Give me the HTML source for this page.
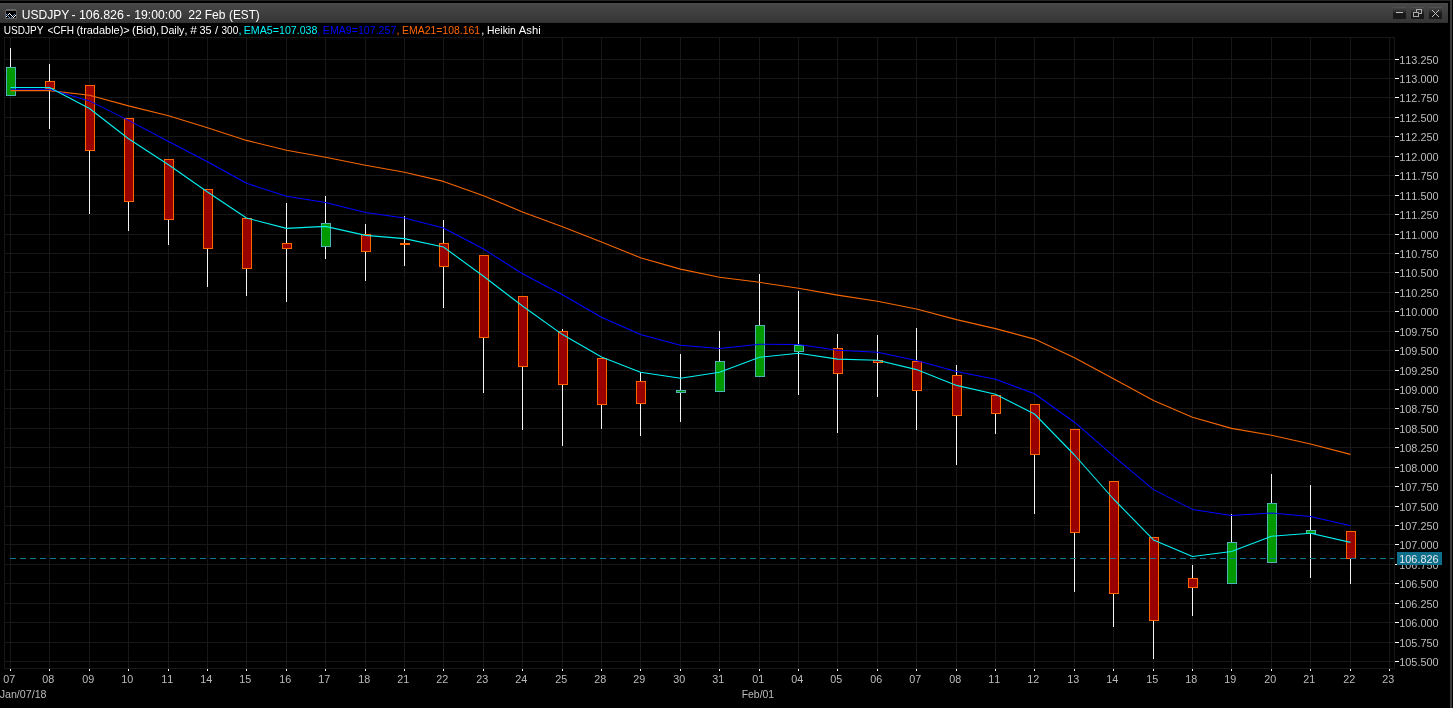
<!DOCTYPE html>
<html><head><meta charset="utf-8"><title>USDJPY</title>
<style>
html,body{margin:0;padding:0;background:#000;}
body{width:1453px;height:708px;overflow:hidden;position:relative;font-family:"Liberation Sans",Arial,sans-serif;}
#top{position:absolute;left:0;top:0;width:1452px;height:1px;background:#252525;}
#rb1{position:absolute;left:1450px;top:0;width:2px;height:708px;background:#3a3a3a;}
#tb{position:absolute;left:0;top:3px;width:1448px;height:20px;background:linear-gradient(#4b4b4b 0,#464646 2px,#363636 19px,#2c2c2c 20px);}
.btn{position:absolute;top:7px;width:13px;height:12px;background:linear-gradient(#505050 0,#505050 1px,#454545 1px,#303030 35%,#1a1a1a 55%,#181818);}
svg{position:absolute;left:0;top:0;will-change:transform;}
text{font-family:"Liberation Sans",Arial,sans-serif;font-size:11px;fill:#bcbcbc;font-kerning:none;}
.t text{font-size:12px;fill:#fff;}
</style></head><body>
<div id="top"></div><div id="rb1"></div>
<div id="tb"></div>
<div class="btn" style="left:1393px"></div><div class="btn" style="left:1411px"></div><div class="btn" style="left:1429px"></div>

<svg width="1453" height="708" viewBox="0 0 1453 708">
<g shape-rendering="crispEdges"><rect x="6" y="9" width="10" height="1" fill="#666"/><rect x="5" y="10" width="12" height="9" fill="#606060"/><rect x="6" y="11" width="10" height="7" fill="#000"/>
<rect x="6" y="14" width="1" height="1" fill="#5f9ee0"/>
<rect x="7" y="15" width="1" height="1" fill="#5f9ee0"/>
<rect x="8" y="16" width="1" height="1" fill="#5f9ee0"/>
<rect x="9" y="17" width="1" height="1" fill="#5f9ee0"/>
<rect x="11" y="17" width="1" height="1" fill="#5f9ee0"/>
<rect x="12" y="16" width="1" height="1" fill="#5f9ee0"/>
<rect x="13" y="15" width="1" height="1" fill="#5f9ee0"/>
<rect x="14" y="14" width="1" height="1" fill="#5f9ee0"/>
<rect x="6" y="16" width="1" height="1" fill="#fff"/>
<rect x="8" y="14" width="1" height="1" fill="#fff"/>
<rect x="9" y="13" width="1" height="1" fill="#fff"/>
<rect x="10" y="14" width="1" height="1" fill="#fff"/>
<rect x="11" y="15" width="1" height="1" fill="#fff"/>
<rect x="12" y="16" width="1" height="1" fill="#fff"/>
<rect x="13" y="17" width="1" height="1" fill="#fff"/>
<rect x="14" y="16" width="1" height="1" fill="#fff"/>
<rect x="15" y="15" width="1" height="1" fill="#fff"/>
</g>
<g class="t"><text y="19">
<tspan x="21.69" textLength="47.63" lengthAdjust="spacingAndGlyphs">USDJPY</tspan> <tspan x="71.59" textLength="4.02" lengthAdjust="spacingAndGlyphs">-</tspan> <tspan x="78.96" textLength="45.00" lengthAdjust="spacingAndGlyphs">106.826</tspan> <tspan x="126.18" textLength="4.15" lengthAdjust="spacingAndGlyphs">-</tspan> <tspan x="134.28" textLength="47.51" lengthAdjust="spacingAndGlyphs">19:00:00</tspan> <tspan x="188.23" textLength="13.69" lengthAdjust="spacingAndGlyphs">22</tspan> <tspan x="204.70" textLength="20.69" lengthAdjust="spacingAndGlyphs">Feb</tspan> <tspan x="229.08" textLength="30.72" lengthAdjust="spacingAndGlyphs">(EST)</tspan>
</text></g>
<text y="34">
<tspan x="3.78" textLength="39.65" lengthAdjust="spacingAndGlyphs" style="fill:#ffffff">USDJPY</tspan> <tspan x="47.46" textLength="26.48" lengthAdjust="spacingAndGlyphs" style="fill:#ffffff">&lt;CFH</tspan> <tspan x="76.44" textLength="53.27" lengthAdjust="spacingAndGlyphs" style="fill:#ffffff">(tradable)&gt;</tspan> <tspan x="132.12" textLength="27.12" lengthAdjust="spacingAndGlyphs" style="fill:#ffffff">(Bid),</tspan> <tspan x="160.72" textLength="26.65" lengthAdjust="spacingAndGlyphs" style="fill:#ffffff">Daily,</tspan> <tspan x="190.30" textLength="6.61" lengthAdjust="spacingAndGlyphs" style="fill:#ffffff">#</tspan> <tspan x="199.43" textLength="12.15" lengthAdjust="spacingAndGlyphs" style="fill:#ffffff">35</tspan> <tspan x="214.97" textLength="3.10" lengthAdjust="spacingAndGlyphs" style="fill:#ffffff">/</tspan> <tspan x="221.47" textLength="16.74" lengthAdjust="spacingAndGlyphs" style="fill:#ffffff">300</tspan> <tspan x="238.49" textLength="3.06" lengthAdjust="spacingAndGlyphs" style="fill:#00f4fc">,</tspan> <tspan x="243.73" textLength="73.74" lengthAdjust="spacingAndGlyphs" style="fill:#00f4fc">EMA5=107.038</tspan> <tspan x="317.29" textLength="3.06" lengthAdjust="spacingAndGlyphs" style="fill:#0000ff">,</tspan> <tspan x="322.83" textLength="73.49" lengthAdjust="spacingAndGlyphs" style="fill:#0000ff">EMA9=107.257</tspan> <tspan x="396.39" textLength="3.06" lengthAdjust="spacingAndGlyphs" style="fill:#ff6600">,</tspan> <tspan x="402.05" textLength="78.01" lengthAdjust="spacingAndGlyphs" style="fill:#ff6600">EMA21=108.161</tspan> <tspan x="481.19" textLength="3.06" lengthAdjust="spacingAndGlyphs" style="fill:#ffffff">,</tspan> <tspan x="487.06" textLength="28.86" lengthAdjust="spacingAndGlyphs" style="fill:#ffffff">Heikin</tspan> <tspan x="518.82" textLength="21.86" lengthAdjust="spacingAndGlyphs" style="fill:#ffffff">Ashi</tspan>
</text>
<g shape-rendering="crispEdges" fill="none" stroke="#a8a8a8" stroke-width="1">
<line x1="1396" y1="12.5" x2="1403" y2="12.5" stroke="#c0c0c0"/>
<rect x="1416.5" y="9.5" width="5" height="4"/><rect x="1413.5" y="12.5" width="5" height="4" fill="#1c1c1c"/>
</g>
<path d="M1432 10 L1439 17 M1439 10 L1432 17" stroke="#c0c0c0" stroke-width="1" fill="none"/>
<g shape-rendering="crispEdges" fill="#171717">
<rect x="4" y="37" width="1391" height="1"/><rect x="4" y="668" width="1391" height="1"/><rect x="4" y="37" width="1" height="632"/><rect x="1394" y="37" width="1" height="632"/>
<rect x="10" y="37" width="1" height="632"/>
<rect x="49" y="37" width="1" height="632"/>
<rect x="89" y="37" width="1" height="632"/>
<rect x="128" y="37" width="1" height="632"/>
<rect x="168" y="37" width="1" height="632"/>
<rect x="207" y="37" width="1" height="632"/>
<rect x="246" y="37" width="1" height="632"/>
<rect x="286" y="37" width="1" height="632"/>
<rect x="325" y="37" width="1" height="632"/>
<rect x="365" y="37" width="1" height="632"/>
<rect x="404" y="37" width="1" height="632"/>
<rect x="443" y="37" width="1" height="632"/>
<rect x="483" y="37" width="1" height="632"/>
<rect x="522" y="37" width="1" height="632"/>
<rect x="562" y="37" width="1" height="632"/>
<rect x="601" y="37" width="1" height="632"/>
<rect x="640" y="37" width="1" height="632"/>
<rect x="680" y="37" width="1" height="632"/>
<rect x="719" y="37" width="1" height="632"/>
<rect x="759" y="37" width="1" height="632"/>
<rect x="798" y="37" width="1" height="632"/>
<rect x="837" y="37" width="1" height="632"/>
<rect x="877" y="37" width="1" height="632"/>
<rect x="916" y="37" width="1" height="632"/>
<rect x="956" y="37" width="1" height="632"/>
<rect x="995" y="37" width="1" height="632"/>
<rect x="1034" y="37" width="1" height="632"/>
<rect x="1074" y="37" width="1" height="632"/>
<rect x="1113" y="37" width="1" height="632"/>
<rect x="1153" y="37" width="1" height="632"/>
<rect x="1192" y="37" width="1" height="632"/>
<rect x="1231" y="37" width="1" height="632"/>
<rect x="1271" y="37" width="1" height="632"/>
<rect x="1310" y="37" width="1" height="632"/>
<rect x="1350" y="37" width="1" height="632"/>
<rect x="1389" y="37" width="1" height="632"/>
<rect x="4" y="59" width="1391" height="1"/>
<rect x="4" y="78" width="1391" height="1"/>
<rect x="4" y="97" width="1391" height="1"/>
<rect x="4" y="117" width="1391" height="1"/>
<rect x="4" y="136" width="1391" height="1"/>
<rect x="4" y="156" width="1391" height="1"/>
<rect x="4" y="175" width="1391" height="1"/>
<rect x="4" y="195" width="1391" height="1"/>
<rect x="4" y="214" width="1391" height="1"/>
<rect x="4" y="234" width="1391" height="1"/>
<rect x="4" y="253" width="1391" height="1"/>
<rect x="4" y="272" width="1391" height="1"/>
<rect x="4" y="292" width="1391" height="1"/>
<rect x="4" y="311" width="1391" height="1"/>
<rect x="4" y="331" width="1391" height="1"/>
<rect x="4" y="350" width="1391" height="1"/>
<rect x="4" y="370" width="1391" height="1"/>
<rect x="4" y="389" width="1391" height="1"/>
<rect x="4" y="408" width="1391" height="1"/>
<rect x="4" y="428" width="1391" height="1"/>
<rect x="4" y="447" width="1391" height="1"/>
<rect x="4" y="467" width="1391" height="1"/>
<rect x="4" y="486" width="1391" height="1"/>
<rect x="4" y="506" width="1391" height="1"/>
<rect x="4" y="525" width="1391" height="1"/>
<rect x="4" y="544" width="1391" height="1"/>
<rect x="4" y="564" width="1391" height="1"/>
<rect x="4" y="583" width="1391" height="1"/>
<rect x="4" y="603" width="1391" height="1"/>
<rect x="4" y="622" width="1391" height="1"/>
<rect x="4" y="642" width="1391" height="1"/>
<rect x="4" y="661" width="1391" height="1"/>
</g>
<g shape-rendering="crispEdges" fill="#ffffff">
<rect x="10" y="669" width="1" height="2"/>
<rect x="49" y="669" width="1" height="2"/>
<rect x="89" y="669" width="1" height="2"/>
<rect x="128" y="669" width="1" height="2"/>
<rect x="168" y="669" width="1" height="2"/>
<rect x="207" y="669" width="1" height="2"/>
<rect x="246" y="669" width="1" height="2"/>
<rect x="286" y="669" width="1" height="2"/>
<rect x="325" y="669" width="1" height="2"/>
<rect x="365" y="669" width="1" height="2"/>
<rect x="404" y="669" width="1" height="2"/>
<rect x="443" y="669" width="1" height="2"/>
<rect x="483" y="669" width="1" height="2"/>
<rect x="522" y="669" width="1" height="2"/>
<rect x="562" y="669" width="1" height="2"/>
<rect x="601" y="669" width="1" height="2"/>
<rect x="640" y="669" width="1" height="2"/>
<rect x="680" y="669" width="1" height="2"/>
<rect x="719" y="669" width="1" height="2"/>
<rect x="759" y="669" width="1" height="2"/>
<rect x="798" y="669" width="1" height="2"/>
<rect x="837" y="669" width="1" height="2"/>
<rect x="877" y="669" width="1" height="2"/>
<rect x="916" y="669" width="1" height="2"/>
<rect x="956" y="669" width="1" height="2"/>
<rect x="995" y="669" width="1" height="2"/>
<rect x="1034" y="669" width="1" height="2"/>
<rect x="1074" y="669" width="1" height="2"/>
<rect x="1113" y="669" width="1" height="2"/>
<rect x="1153" y="669" width="1" height="2"/>
<rect x="1192" y="669" width="1" height="2"/>
<rect x="1231" y="669" width="1" height="2"/>
<rect x="1271" y="669" width="1" height="2"/>
<rect x="1310" y="669" width="1" height="2"/>
<rect x="1350" y="669" width="1" height="2"/>
<rect x="1389" y="669" width="1" height="2"/>
<rect x="1395" y="59" width="4" height="1"/>
<rect x="1395" y="78" width="4" height="1"/>
<rect x="1395" y="97" width="4" height="1"/>
<rect x="1395" y="117" width="4" height="1"/>
<rect x="1395" y="136" width="4" height="1"/>
<rect x="1395" y="156" width="4" height="1"/>
<rect x="1395" y="175" width="4" height="1"/>
<rect x="1395" y="195" width="4" height="1"/>
<rect x="1395" y="214" width="4" height="1"/>
<rect x="1395" y="234" width="4" height="1"/>
<rect x="1395" y="253" width="4" height="1"/>
<rect x="1395" y="272" width="4" height="1"/>
<rect x="1395" y="292" width="4" height="1"/>
<rect x="1395" y="311" width="4" height="1"/>
<rect x="1395" y="331" width="4" height="1"/>
<rect x="1395" y="350" width="4" height="1"/>
<rect x="1395" y="370" width="4" height="1"/>
<rect x="1395" y="389" width="4" height="1"/>
<rect x="1395" y="408" width="4" height="1"/>
<rect x="1395" y="428" width="4" height="1"/>
<rect x="1395" y="447" width="4" height="1"/>
<rect x="1395" y="467" width="4" height="1"/>
<rect x="1395" y="486" width="4" height="1"/>
<rect x="1395" y="506" width="4" height="1"/>
<rect x="1395" y="525" width="4" height="1"/>
<rect x="1395" y="544" width="4" height="1"/>
<rect x="1395" y="564" width="4" height="1"/>
<rect x="1395" y="583" width="4" height="1"/>
<rect x="1395" y="603" width="4" height="1"/>
<rect x="1395" y="622" width="4" height="1"/>
<rect x="1395" y="642" width="4" height="1"/>
<rect x="1395" y="661" width="4" height="1"/>
</g>
<g shape-rendering="crispEdges">
<rect x="10" y="48" width="1" height="48" fill="#f4f4f4"/>
<rect x="6" y="67" width="10" height="29" fill="#4fb0b6"/>
<rect x="7" y="68" width="8" height="27" fill="#009900"/>
<rect x="49" y="64" width="1" height="65" fill="#f4f4f4"/>
<rect x="45" y="81" width="10" height="8" fill="#ff6600"/>
<rect x="46" y="82" width="8" height="6" fill="#990000"/>
<rect x="89" y="85" width="1" height="129" fill="#f4f4f4"/>
<rect x="85" y="85" width="10" height="66" fill="#ff6600"/>
<rect x="86" y="86" width="8" height="64" fill="#990000"/>
<rect x="128" y="118" width="1" height="113" fill="#f4f4f4"/>
<rect x="124" y="118" width="10" height="84" fill="#ff6600"/>
<rect x="125" y="119" width="8" height="82" fill="#990000"/>
<rect x="168" y="159" width="1" height="86" fill="#f4f4f4"/>
<rect x="164" y="159" width="10" height="61" fill="#ff6600"/>
<rect x="165" y="160" width="8" height="59" fill="#990000"/>
<rect x="207" y="189" width="1" height="98" fill="#f4f4f4"/>
<rect x="203" y="189" width="10" height="60" fill="#ff6600"/>
<rect x="204" y="190" width="8" height="58" fill="#990000"/>
<rect x="246" y="218" width="1" height="78" fill="#f4f4f4"/>
<rect x="242" y="218" width="10" height="51" fill="#ff6600"/>
<rect x="243" y="219" width="8" height="49" fill="#990000"/>
<rect x="286" y="203" width="1" height="99" fill="#f4f4f4"/>
<rect x="282" y="243" width="10" height="6" fill="#ff6600"/>
<rect x="283" y="244" width="8" height="4" fill="#990000"/>
<rect x="325" y="196" width="1" height="63" fill="#f4f4f4"/>
<rect x="321" y="223" width="10" height="24" fill="#4fb0b6"/>
<rect x="322" y="224" width="8" height="22" fill="#009900"/>
<rect x="365" y="224" width="1" height="57" fill="#f4f4f4"/>
<rect x="361" y="234" width="10" height="18" fill="#ff6600"/>
<rect x="362" y="235" width="8" height="16" fill="#990000"/>
<rect x="404" y="216" width="1" height="50" fill="#f4f4f4"/>
<rect x="400" y="243" width="10" height="2" fill="#ff6600"/>
<rect x="443" y="220" width="1" height="88" fill="#f4f4f4"/>
<rect x="439" y="243" width="10" height="24" fill="#ff6600"/>
<rect x="440" y="244" width="8" height="22" fill="#990000"/>
<rect x="483" y="255" width="1" height="138" fill="#f4f4f4"/>
<rect x="479" y="255" width="10" height="83" fill="#ff6600"/>
<rect x="480" y="256" width="8" height="81" fill="#990000"/>
<rect x="522" y="296" width="1" height="134" fill="#f4f4f4"/>
<rect x="518" y="296" width="10" height="71" fill="#ff6600"/>
<rect x="519" y="297" width="8" height="69" fill="#990000"/>
<rect x="562" y="329" width="1" height="117" fill="#f4f4f4"/>
<rect x="558" y="331" width="10" height="54" fill="#ff6600"/>
<rect x="559" y="332" width="8" height="52" fill="#990000"/>
<rect x="601" y="358" width="1" height="71" fill="#f4f4f4"/>
<rect x="597" y="358" width="10" height="47" fill="#ff6600"/>
<rect x="598" y="359" width="8" height="45" fill="#990000"/>
<rect x="640" y="372" width="1" height="64" fill="#f4f4f4"/>
<rect x="636" y="381" width="10" height="23" fill="#ff6600"/>
<rect x="637" y="382" width="8" height="21" fill="#990000"/>
<rect x="680" y="354" width="1" height="68" fill="#f4f4f4"/>
<rect x="676" y="390" width="10" height="3" fill="#4fb0b6"/>
<rect x="677" y="391" width="8" height="1" fill="#009900"/>
<rect x="719" y="331" width="1" height="61" fill="#f4f4f4"/>
<rect x="715" y="361" width="10" height="31" fill="#4fb0b6"/>
<rect x="716" y="362" width="8" height="29" fill="#009900"/>
<rect x="759" y="274" width="1" height="103" fill="#f4f4f4"/>
<rect x="755" y="325" width="10" height="52" fill="#4fb0b6"/>
<rect x="756" y="326" width="8" height="50" fill="#009900"/>
<rect x="798" y="291" width="1" height="104" fill="#f4f4f4"/>
<rect x="794" y="345" width="10" height="7" fill="#4fb0b6"/>
<rect x="795" y="346" width="8" height="5" fill="#009900"/>
<rect x="837" y="334" width="1" height="99" fill="#f4f4f4"/>
<rect x="833" y="348" width="10" height="26" fill="#ff6600"/>
<rect x="834" y="349" width="8" height="24" fill="#990000"/>
<rect x="877" y="335" width="1" height="62" fill="#f4f4f4"/>
<rect x="873" y="360" width="10" height="3" fill="#ff6600"/>
<rect x="874" y="361" width="8" height="1" fill="#990000"/>
<rect x="916" y="328" width="1" height="102" fill="#f4f4f4"/>
<rect x="912" y="361" width="10" height="30" fill="#ff6600"/>
<rect x="913" y="362" width="8" height="28" fill="#990000"/>
<rect x="956" y="365" width="1" height="100" fill="#f4f4f4"/>
<rect x="952" y="375" width="10" height="41" fill="#ff6600"/>
<rect x="953" y="376" width="8" height="39" fill="#990000"/>
<rect x="995" y="395" width="1" height="39" fill="#f4f4f4"/>
<rect x="991" y="395" width="10" height="19" fill="#ff6600"/>
<rect x="992" y="396" width="8" height="17" fill="#990000"/>
<rect x="1034" y="404" width="1" height="110" fill="#f4f4f4"/>
<rect x="1030" y="404" width="10" height="51" fill="#ff6600"/>
<rect x="1031" y="405" width="8" height="49" fill="#990000"/>
<rect x="1074" y="429" width="1" height="163" fill="#f4f4f4"/>
<rect x="1070" y="429" width="10" height="104" fill="#ff6600"/>
<rect x="1071" y="430" width="8" height="102" fill="#990000"/>
<rect x="1113" y="481" width="1" height="146" fill="#f4f4f4"/>
<rect x="1109" y="481" width="10" height="113" fill="#ff6600"/>
<rect x="1110" y="482" width="8" height="111" fill="#990000"/>
<rect x="1153" y="537" width="1" height="122" fill="#f4f4f4"/>
<rect x="1149" y="537" width="10" height="84" fill="#ff6600"/>
<rect x="1150" y="538" width="8" height="82" fill="#990000"/>
<rect x="1192" y="565" width="1" height="51" fill="#f4f4f4"/>
<rect x="1188" y="578" width="10" height="10" fill="#ff6600"/>
<rect x="1189" y="579" width="8" height="8" fill="#990000"/>
<rect x="1231" y="514" width="1" height="70" fill="#f4f4f4"/>
<rect x="1227" y="542" width="10" height="42" fill="#4fb0b6"/>
<rect x="1228" y="543" width="8" height="40" fill="#009900"/>
<rect x="1271" y="474" width="1" height="89" fill="#f4f4f4"/>
<rect x="1267" y="503" width="10" height="60" fill="#4fb0b6"/>
<rect x="1268" y="504" width="8" height="58" fill="#009900"/>
<rect x="1310" y="485" width="1" height="93" fill="#f4f4f4"/>
<rect x="1306" y="530" width="10" height="4" fill="#4fb0b6"/>
<rect x="1307" y="531" width="8" height="2" fill="#009900"/>
<rect x="1350" y="531" width="1" height="53" fill="#f4f4f4"/>
<rect x="1346" y="531" width="10" height="28" fill="#ff6600"/>
<rect x="1347" y="532" width="8" height="26" fill="#990000"/>
</g>
<g shape-rendering="crispEdges" fill="#0d7792">
<rect x="10" y="558" width="6" height="1"/>
<rect x="20" y="558" width="6" height="1"/>
<rect x="30" y="558" width="6" height="1"/>
<rect x="40" y="558" width="6" height="1"/>
<rect x="50" y="558" width="6" height="1"/>
<rect x="60" y="558" width="6" height="1"/>
<rect x="70" y="558" width="6" height="1"/>
<rect x="80" y="558" width="6" height="1"/>
<rect x="90" y="558" width="6" height="1"/>
<rect x="100" y="558" width="6" height="1"/>
<rect x="110" y="558" width="6" height="1"/>
<rect x="120" y="558" width="6" height="1"/>
<rect x="130" y="558" width="6" height="1"/>
<rect x="140" y="558" width="6" height="1"/>
<rect x="150" y="558" width="6" height="1"/>
<rect x="160" y="558" width="6" height="1"/>
<rect x="170" y="558" width="6" height="1"/>
<rect x="180" y="558" width="6" height="1"/>
<rect x="190" y="558" width="6" height="1"/>
<rect x="200" y="558" width="6" height="1"/>
<rect x="210" y="558" width="6" height="1"/>
<rect x="220" y="558" width="6" height="1"/>
<rect x="230" y="558" width="6" height="1"/>
<rect x="240" y="558" width="6" height="1"/>
<rect x="250" y="558" width="6" height="1"/>
<rect x="260" y="558" width="6" height="1"/>
<rect x="270" y="558" width="6" height="1"/>
<rect x="280" y="558" width="6" height="1"/>
<rect x="290" y="558" width="6" height="1"/>
<rect x="300" y="558" width="6" height="1"/>
<rect x="310" y="558" width="6" height="1"/>
<rect x="320" y="558" width="6" height="1"/>
<rect x="330" y="558" width="6" height="1"/>
<rect x="340" y="558" width="6" height="1"/>
<rect x="350" y="558" width="6" height="1"/>
<rect x="360" y="558" width="6" height="1"/>
<rect x="370" y="558" width="6" height="1"/>
<rect x="380" y="558" width="6" height="1"/>
<rect x="390" y="558" width="6" height="1"/>
<rect x="400" y="558" width="6" height="1"/>
<rect x="410" y="558" width="6" height="1"/>
<rect x="420" y="558" width="6" height="1"/>
<rect x="430" y="558" width="6" height="1"/>
<rect x="440" y="558" width="6" height="1"/>
<rect x="450" y="558" width="6" height="1"/>
<rect x="460" y="558" width="6" height="1"/>
<rect x="470" y="558" width="6" height="1"/>
<rect x="480" y="558" width="6" height="1"/>
<rect x="490" y="558" width="6" height="1"/>
<rect x="500" y="558" width="6" height="1"/>
<rect x="510" y="558" width="6" height="1"/>
<rect x="520" y="558" width="6" height="1"/>
<rect x="530" y="558" width="6" height="1"/>
<rect x="540" y="558" width="6" height="1"/>
<rect x="550" y="558" width="6" height="1"/>
<rect x="560" y="558" width="6" height="1"/>
<rect x="570" y="558" width="6" height="1"/>
<rect x="580" y="558" width="6" height="1"/>
<rect x="590" y="558" width="6" height="1"/>
<rect x="600" y="558" width="6" height="1"/>
<rect x="610" y="558" width="6" height="1"/>
<rect x="620" y="558" width="6" height="1"/>
<rect x="630" y="558" width="6" height="1"/>
<rect x="640" y="558" width="6" height="1"/>
<rect x="650" y="558" width="6" height="1"/>
<rect x="660" y="558" width="6" height="1"/>
<rect x="670" y="558" width="6" height="1"/>
<rect x="680" y="558" width="6" height="1"/>
<rect x="690" y="558" width="6" height="1"/>
<rect x="700" y="558" width="6" height="1"/>
<rect x="710" y="558" width="6" height="1"/>
<rect x="720" y="558" width="6" height="1"/>
<rect x="730" y="558" width="6" height="1"/>
<rect x="740" y="558" width="6" height="1"/>
<rect x="750" y="558" width="6" height="1"/>
<rect x="760" y="558" width="6" height="1"/>
<rect x="770" y="558" width="6" height="1"/>
<rect x="780" y="558" width="6" height="1"/>
<rect x="790" y="558" width="6" height="1"/>
<rect x="800" y="558" width="6" height="1"/>
<rect x="810" y="558" width="6" height="1"/>
<rect x="820" y="558" width="6" height="1"/>
<rect x="830" y="558" width="6" height="1"/>
<rect x="840" y="558" width="6" height="1"/>
<rect x="850" y="558" width="6" height="1"/>
<rect x="860" y="558" width="6" height="1"/>
<rect x="870" y="558" width="6" height="1"/>
<rect x="880" y="558" width="6" height="1"/>
<rect x="890" y="558" width="6" height="1"/>
<rect x="900" y="558" width="6" height="1"/>
<rect x="910" y="558" width="6" height="1"/>
<rect x="920" y="558" width="6" height="1"/>
<rect x="930" y="558" width="6" height="1"/>
<rect x="940" y="558" width="6" height="1"/>
<rect x="950" y="558" width="6" height="1"/>
<rect x="960" y="558" width="6" height="1"/>
<rect x="970" y="558" width="6" height="1"/>
<rect x="980" y="558" width="6" height="1"/>
<rect x="990" y="558" width="6" height="1"/>
<rect x="1000" y="558" width="6" height="1"/>
<rect x="1010" y="558" width="6" height="1"/>
<rect x="1020" y="558" width="6" height="1"/>
<rect x="1030" y="558" width="6" height="1"/>
<rect x="1040" y="558" width="6" height="1"/>
<rect x="1050" y="558" width="6" height="1"/>
<rect x="1060" y="558" width="6" height="1"/>
<rect x="1070" y="558" width="6" height="1"/>
<rect x="1080" y="558" width="6" height="1"/>
<rect x="1090" y="558" width="6" height="1"/>
<rect x="1100" y="558" width="6" height="1"/>
<rect x="1110" y="558" width="6" height="1"/>
<rect x="1120" y="558" width="6" height="1"/>
<rect x="1130" y="558" width="6" height="1"/>
<rect x="1140" y="558" width="6" height="1"/>
<rect x="1150" y="558" width="6" height="1"/>
<rect x="1160" y="558" width="6" height="1"/>
<rect x="1170" y="558" width="6" height="1"/>
<rect x="1180" y="558" width="6" height="1"/>
<rect x="1190" y="558" width="6" height="1"/>
<rect x="1200" y="558" width="6" height="1"/>
<rect x="1210" y="558" width="6" height="1"/>
<rect x="1220" y="558" width="6" height="1"/>
<rect x="1230" y="558" width="6" height="1"/>
<rect x="1240" y="558" width="6" height="1"/>
<rect x="1250" y="558" width="6" height="1"/>
<rect x="1260" y="558" width="6" height="1"/>
<rect x="1270" y="558" width="6" height="1"/>
<rect x="1280" y="558" width="6" height="1"/>
<rect x="1290" y="558" width="6" height="1"/>
<rect x="1300" y="558" width="6" height="1"/>
<rect x="1310" y="558" width="6" height="1"/>
<rect x="1320" y="558" width="6" height="1"/>
<rect x="1330" y="558" width="6" height="1"/>
<rect x="1340" y="558" width="6" height="1"/>
<rect x="1350" y="558" width="6" height="1"/>
<rect x="1360" y="558" width="6" height="1"/>
<rect x="1370" y="558" width="6" height="1"/>
<rect x="1380" y="558" width="6" height="1"/>
<rect x="1390" y="558" width="4" height="1"/>
</g>
<polyline points="10.5,90.6 49.5,90.6 89.5,95.3 128.5,105.9 168.5,115.8 207.5,127.8 246.5,140.4 286.5,150.3 325.5,157.3 365.5,165.3 404.5,172.2 443.5,181.4 483.5,195.7 522.5,211.9 562.5,226.7 601.5,242.1 640.5,257.7 680.5,269.1 719.5,277.3 759.5,282.3 798.5,288.3 837.5,295.1 877.5,301.3 916.5,309.0 956.5,319.6 995.5,328.6 1034.5,339.1 1074.5,357.7 1113.5,378.7 1153.5,400.4 1192.5,417.3 1231.5,428.4 1271.5,435.3 1310.5,444.0 1350.5,454.4" fill="none" stroke="#f56600" stroke-width="1.1" stroke-linejoin="round"/>
<polyline points="10.5,89.2 49.5,89.2 89.5,100.9 128.5,120.4 168.5,141.5 207.5,161.7 246.5,183.3 286.5,196.2 325.5,202.5 365.5,212.6 404.5,218.0 443.5,228.0 483.5,249.0 522.5,273.8 562.5,294.7 601.5,317.2 640.5,334.6 680.5,345.3 719.5,348.4 759.5,344.3 798.5,344.4 837.5,350.3 877.5,352.3 916.5,360.4 956.5,371.5 995.5,379.2 1034.5,393.7 1074.5,422.2 1113.5,456.2 1153.5,489.6 1192.5,509.4 1231.5,515.4 1271.5,513.1 1310.5,516.4 1350.5,525.8" fill="none" stroke="#0000ff" stroke-width="1.05" stroke-linejoin="round"/>
<polyline points="10.5,87.5 49.5,87.5 89.5,108.5 128.5,138.7 168.5,164.7 207.5,192.0 246.5,218.0 286.5,228.4 325.5,226.4 365.5,235.4 404.5,238.6 443.5,247.0 483.5,276.3 522.5,306.0 562.5,334.6 601.5,356.9 640.5,372.2 680.5,378.2 719.5,372.2 759.5,357.2 798.5,353.3 837.5,359.1 877.5,360.3 916.5,369.6 956.5,385.4 995.5,394.2 1034.5,414.0 1074.5,455.0 1113.5,499.0 1153.5,539.9 1192.5,556.5 1231.5,551.5 1271.5,536.2 1310.5,533.2 1350.5,542.4" fill="none" stroke="#00f0f0" stroke-width="1.1" stroke-linejoin="round"/>
<text x="1399.27" y="64" textLength="39.34" lengthAdjust="spacingAndGlyphs">113.250</text>
<text x="1399.27" y="83" textLength="39.34" lengthAdjust="spacingAndGlyphs">113.000</text>
<text x="1399.27" y="102" textLength="39.34" lengthAdjust="spacingAndGlyphs">112.750</text>
<text x="1399.27" y="122" textLength="39.34" lengthAdjust="spacingAndGlyphs">112.500</text>
<text x="1399.27" y="141" textLength="39.34" lengthAdjust="spacingAndGlyphs">112.250</text>
<text x="1399.27" y="161" textLength="39.34" lengthAdjust="spacingAndGlyphs">112.000</text>
<text x="1399.27" y="180" textLength="39.34" lengthAdjust="spacingAndGlyphs">111.750</text>
<text x="1399.27" y="200" textLength="39.34" lengthAdjust="spacingAndGlyphs">111.500</text>
<text x="1399.27" y="219" textLength="39.34" lengthAdjust="spacingAndGlyphs">111.250</text>
<text x="1399.27" y="239" textLength="39.34" lengthAdjust="spacingAndGlyphs">111.000</text>
<text x="1399.27" y="258" textLength="39.34" lengthAdjust="spacingAndGlyphs">110.750</text>
<text x="1399.27" y="277" textLength="39.34" lengthAdjust="spacingAndGlyphs">110.500</text>
<text x="1399.27" y="297" textLength="39.34" lengthAdjust="spacingAndGlyphs">110.250</text>
<text x="1399.27" y="316" textLength="39.34" lengthAdjust="spacingAndGlyphs">110.000</text>
<text x="1399.27" y="336" textLength="39.34" lengthAdjust="spacingAndGlyphs">109.750</text>
<text x="1399.27" y="355" textLength="39.34" lengthAdjust="spacingAndGlyphs">109.500</text>
<text x="1399.27" y="375" textLength="39.34" lengthAdjust="spacingAndGlyphs">109.250</text>
<text x="1399.27" y="394" textLength="39.34" lengthAdjust="spacingAndGlyphs">109.000</text>
<text x="1399.27" y="413" textLength="39.34" lengthAdjust="spacingAndGlyphs">108.750</text>
<text x="1399.27" y="433" textLength="39.34" lengthAdjust="spacingAndGlyphs">108.500</text>
<text x="1399.27" y="452" textLength="39.34" lengthAdjust="spacingAndGlyphs">108.250</text>
<text x="1399.27" y="472" textLength="39.34" lengthAdjust="spacingAndGlyphs">108.000</text>
<text x="1399.27" y="491" textLength="39.34" lengthAdjust="spacingAndGlyphs">107.750</text>
<text x="1399.27" y="511" textLength="39.34" lengthAdjust="spacingAndGlyphs">107.500</text>
<text x="1399.27" y="530" textLength="39.34" lengthAdjust="spacingAndGlyphs">107.250</text>
<text x="1399.27" y="549" textLength="39.34" lengthAdjust="spacingAndGlyphs">107.000</text>
<text x="1399.27" y="569" textLength="39.34" lengthAdjust="spacingAndGlyphs">106.750</text>
<text x="1399.27" y="588" textLength="39.34" lengthAdjust="spacingAndGlyphs">106.500</text>
<text x="1399.27" y="608" textLength="39.34" lengthAdjust="spacingAndGlyphs">106.250</text>
<text x="1399.27" y="627" textLength="39.34" lengthAdjust="spacingAndGlyphs">106.000</text>
<text x="1399.27" y="647" textLength="39.34" lengthAdjust="spacingAndGlyphs">105.750</text>
<text x="1399.27" y="666" textLength="39.34" lengthAdjust="spacingAndGlyphs">105.500</text>
<rect x="1397" y="552" width="45" height="13" fill="#0e6f8c" shape-rendering="crispEdges"/>
<text x="1399.27" y="563" textLength="39.34" lengthAdjust="spacingAndGlyphs" style="fill:#e8e8e8">106.826</text>
<text x="3.3" y="683" textLength="12" lengthAdjust="spacingAndGlyphs">07</text>
<text x="42.3" y="683" textLength="12" lengthAdjust="spacingAndGlyphs">08</text>
<text x="82.3" y="683" textLength="12" lengthAdjust="spacingAndGlyphs">09</text>
<text x="121.3" y="683" textLength="12" lengthAdjust="spacingAndGlyphs">10</text>
<text x="161.3" y="683" textLength="12" lengthAdjust="spacingAndGlyphs">11</text>
<text x="200.3" y="683" textLength="12" lengthAdjust="spacingAndGlyphs">14</text>
<text x="239.3" y="683" textLength="12" lengthAdjust="spacingAndGlyphs">15</text>
<text x="279.3" y="683" textLength="12" lengthAdjust="spacingAndGlyphs">16</text>
<text x="318.3" y="683" textLength="12" lengthAdjust="spacingAndGlyphs">17</text>
<text x="358.3" y="683" textLength="12" lengthAdjust="spacingAndGlyphs">18</text>
<text x="397.3" y="683" textLength="12" lengthAdjust="spacingAndGlyphs">21</text>
<text x="436.3" y="683" textLength="12" lengthAdjust="spacingAndGlyphs">22</text>
<text x="476.3" y="683" textLength="12" lengthAdjust="spacingAndGlyphs">23</text>
<text x="515.3" y="683" textLength="12" lengthAdjust="spacingAndGlyphs">24</text>
<text x="555.3" y="683" textLength="12" lengthAdjust="spacingAndGlyphs">25</text>
<text x="594.3" y="683" textLength="12" lengthAdjust="spacingAndGlyphs">28</text>
<text x="633.3" y="683" textLength="12" lengthAdjust="spacingAndGlyphs">29</text>
<text x="673.3" y="683" textLength="12" lengthAdjust="spacingAndGlyphs">30</text>
<text x="712.3" y="683" textLength="12" lengthAdjust="spacingAndGlyphs">31</text>
<text x="752.3" y="683" textLength="12" lengthAdjust="spacingAndGlyphs">01</text>
<text x="791.3" y="683" textLength="12" lengthAdjust="spacingAndGlyphs">04</text>
<text x="830.3" y="683" textLength="12" lengthAdjust="spacingAndGlyphs">05</text>
<text x="870.3" y="683" textLength="12" lengthAdjust="spacingAndGlyphs">06</text>
<text x="909.3" y="683" textLength="12" lengthAdjust="spacingAndGlyphs">07</text>
<text x="949.3" y="683" textLength="12" lengthAdjust="spacingAndGlyphs">08</text>
<text x="988.3" y="683" textLength="12" lengthAdjust="spacingAndGlyphs">11</text>
<text x="1027.3" y="683" textLength="12" lengthAdjust="spacingAndGlyphs">12</text>
<text x="1067.3" y="683" textLength="12" lengthAdjust="spacingAndGlyphs">13</text>
<text x="1106.3" y="683" textLength="12" lengthAdjust="spacingAndGlyphs">14</text>
<text x="1146.3" y="683" textLength="12" lengthAdjust="spacingAndGlyphs">15</text>
<text x="1185.3" y="683" textLength="12" lengthAdjust="spacingAndGlyphs">18</text>
<text x="1224.3" y="683" textLength="12" lengthAdjust="spacingAndGlyphs">19</text>
<text x="1264.3" y="683" textLength="12" lengthAdjust="spacingAndGlyphs">20</text>
<text x="1303.3" y="683" textLength="12" lengthAdjust="spacingAndGlyphs">21</text>
<text x="1343.3" y="683" textLength="12" lengthAdjust="spacingAndGlyphs">22</text>
<text x="1382.3" y="683" textLength="12" lengthAdjust="spacingAndGlyphs">23</text>
<text x="-0.36" y="698" textLength="46.90" lengthAdjust="spacingAndGlyphs">Jan/07/18</text>
<text x="741.65" y="698" textLength="32.50" lengthAdjust="spacingAndGlyphs">Feb/01</text>
</svg></body></html>
